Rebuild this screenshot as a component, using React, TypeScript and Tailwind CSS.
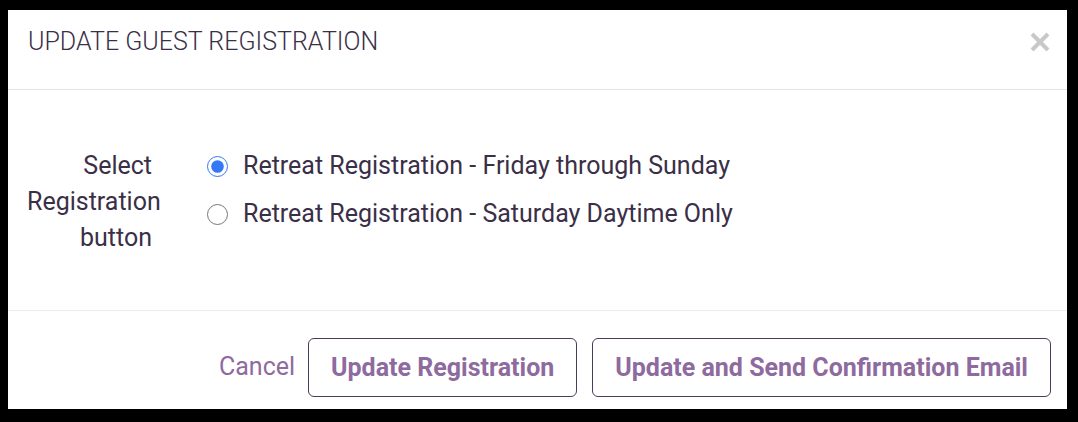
import { useState } from "react";

const options = [
  { id: "full", label: "Retreat Registration - Friday through Sunday" },
  { id: "sat", label: "Retreat Registration - Saturday Daytime Only" },
];

const App = () => {
  const [selected, setSelected] = useState("full");

  return (
    <div
      className="w-[1078px] h-[422px] bg-black pt-[10px] pl-[8px] pr-[11px] pb-[13px]"
      style={{ fontFamily: "Roboto, 'Liberation Sans', sans-serif" }}
    >
      <div className="flex h-full flex-col bg-white text-[#3a2f47]">
        {/* Header */}
        <div className="flex h-[80px] items-start justify-between border-b border-[#e5e5e5] pl-[20px] pr-[15px] pt-[17px]">
          <h2 className="text-[25px] font-light leading-[30px]">
            UPDATE GUEST REGISTRATION
          </h2>
          <button className="mt-[3px] text-[#c8c8c8]" aria-label="Close">
            <svg width="24" height="24" viewBox="0 0 24 24">
              <path
                d="M4 4 L20 20 M20 4 L4 20"
                stroke="currentColor"
                strokeWidth="4"
                strokeLinecap="butt"
              />
            </svg>
          </button>
        </div>

        {/* Body */}
        <div className="flex h-[221px] items-start border-b border-[#ececec] pl-[19px] pt-[58px]">
          <div className="w-[125px] text-right text-[25px] leading-[36px]">
            Select Registration button
          </div>
          <div className="ml-[55px] flex flex-col gap-[12px]">
            {options.map((o) => (
              <label
                key={o.id}
                className="flex cursor-pointer items-center text-[25px] leading-[36px]"
              >
                <input
                  type="radio"
                  name="registration"
                  checked={selected === o.id}
                  onChange={() => setSelected(o.id)}
                  className="m-0 h-[21px] w-[21px] accent-[#3478f6]"
                />
                <span className="ml-[15px]">{o.label}</span>
              </label>
            ))}
          </div>
        </div>

        {/* Footer */}
        <div className="flex flex-1 items-start justify-end gap-[13px] pr-[16px] pt-[27px]">
          <button className="mt-[14px] text-[25px] leading-[30px] text-[#8e6b9e]">
            Cancel
          </button>
          <div className="flex gap-[15px]">
            <button className="h-[59px] rounded-[6px] border border-[#4b3b5c] px-[22px] text-[25px] font-bold text-[#8e6b9e]">
              Update Registration
            </button>
            <button className="h-[59px] rounded-[6px] border border-[#4b3b5c] px-[22px] text-[25px] font-bold text-[#8e6b9e]">
              Update and Send Confirmation Email
            </button>
          </div>
        </div>
      </div>
    </div>
  );
};

export default App;
